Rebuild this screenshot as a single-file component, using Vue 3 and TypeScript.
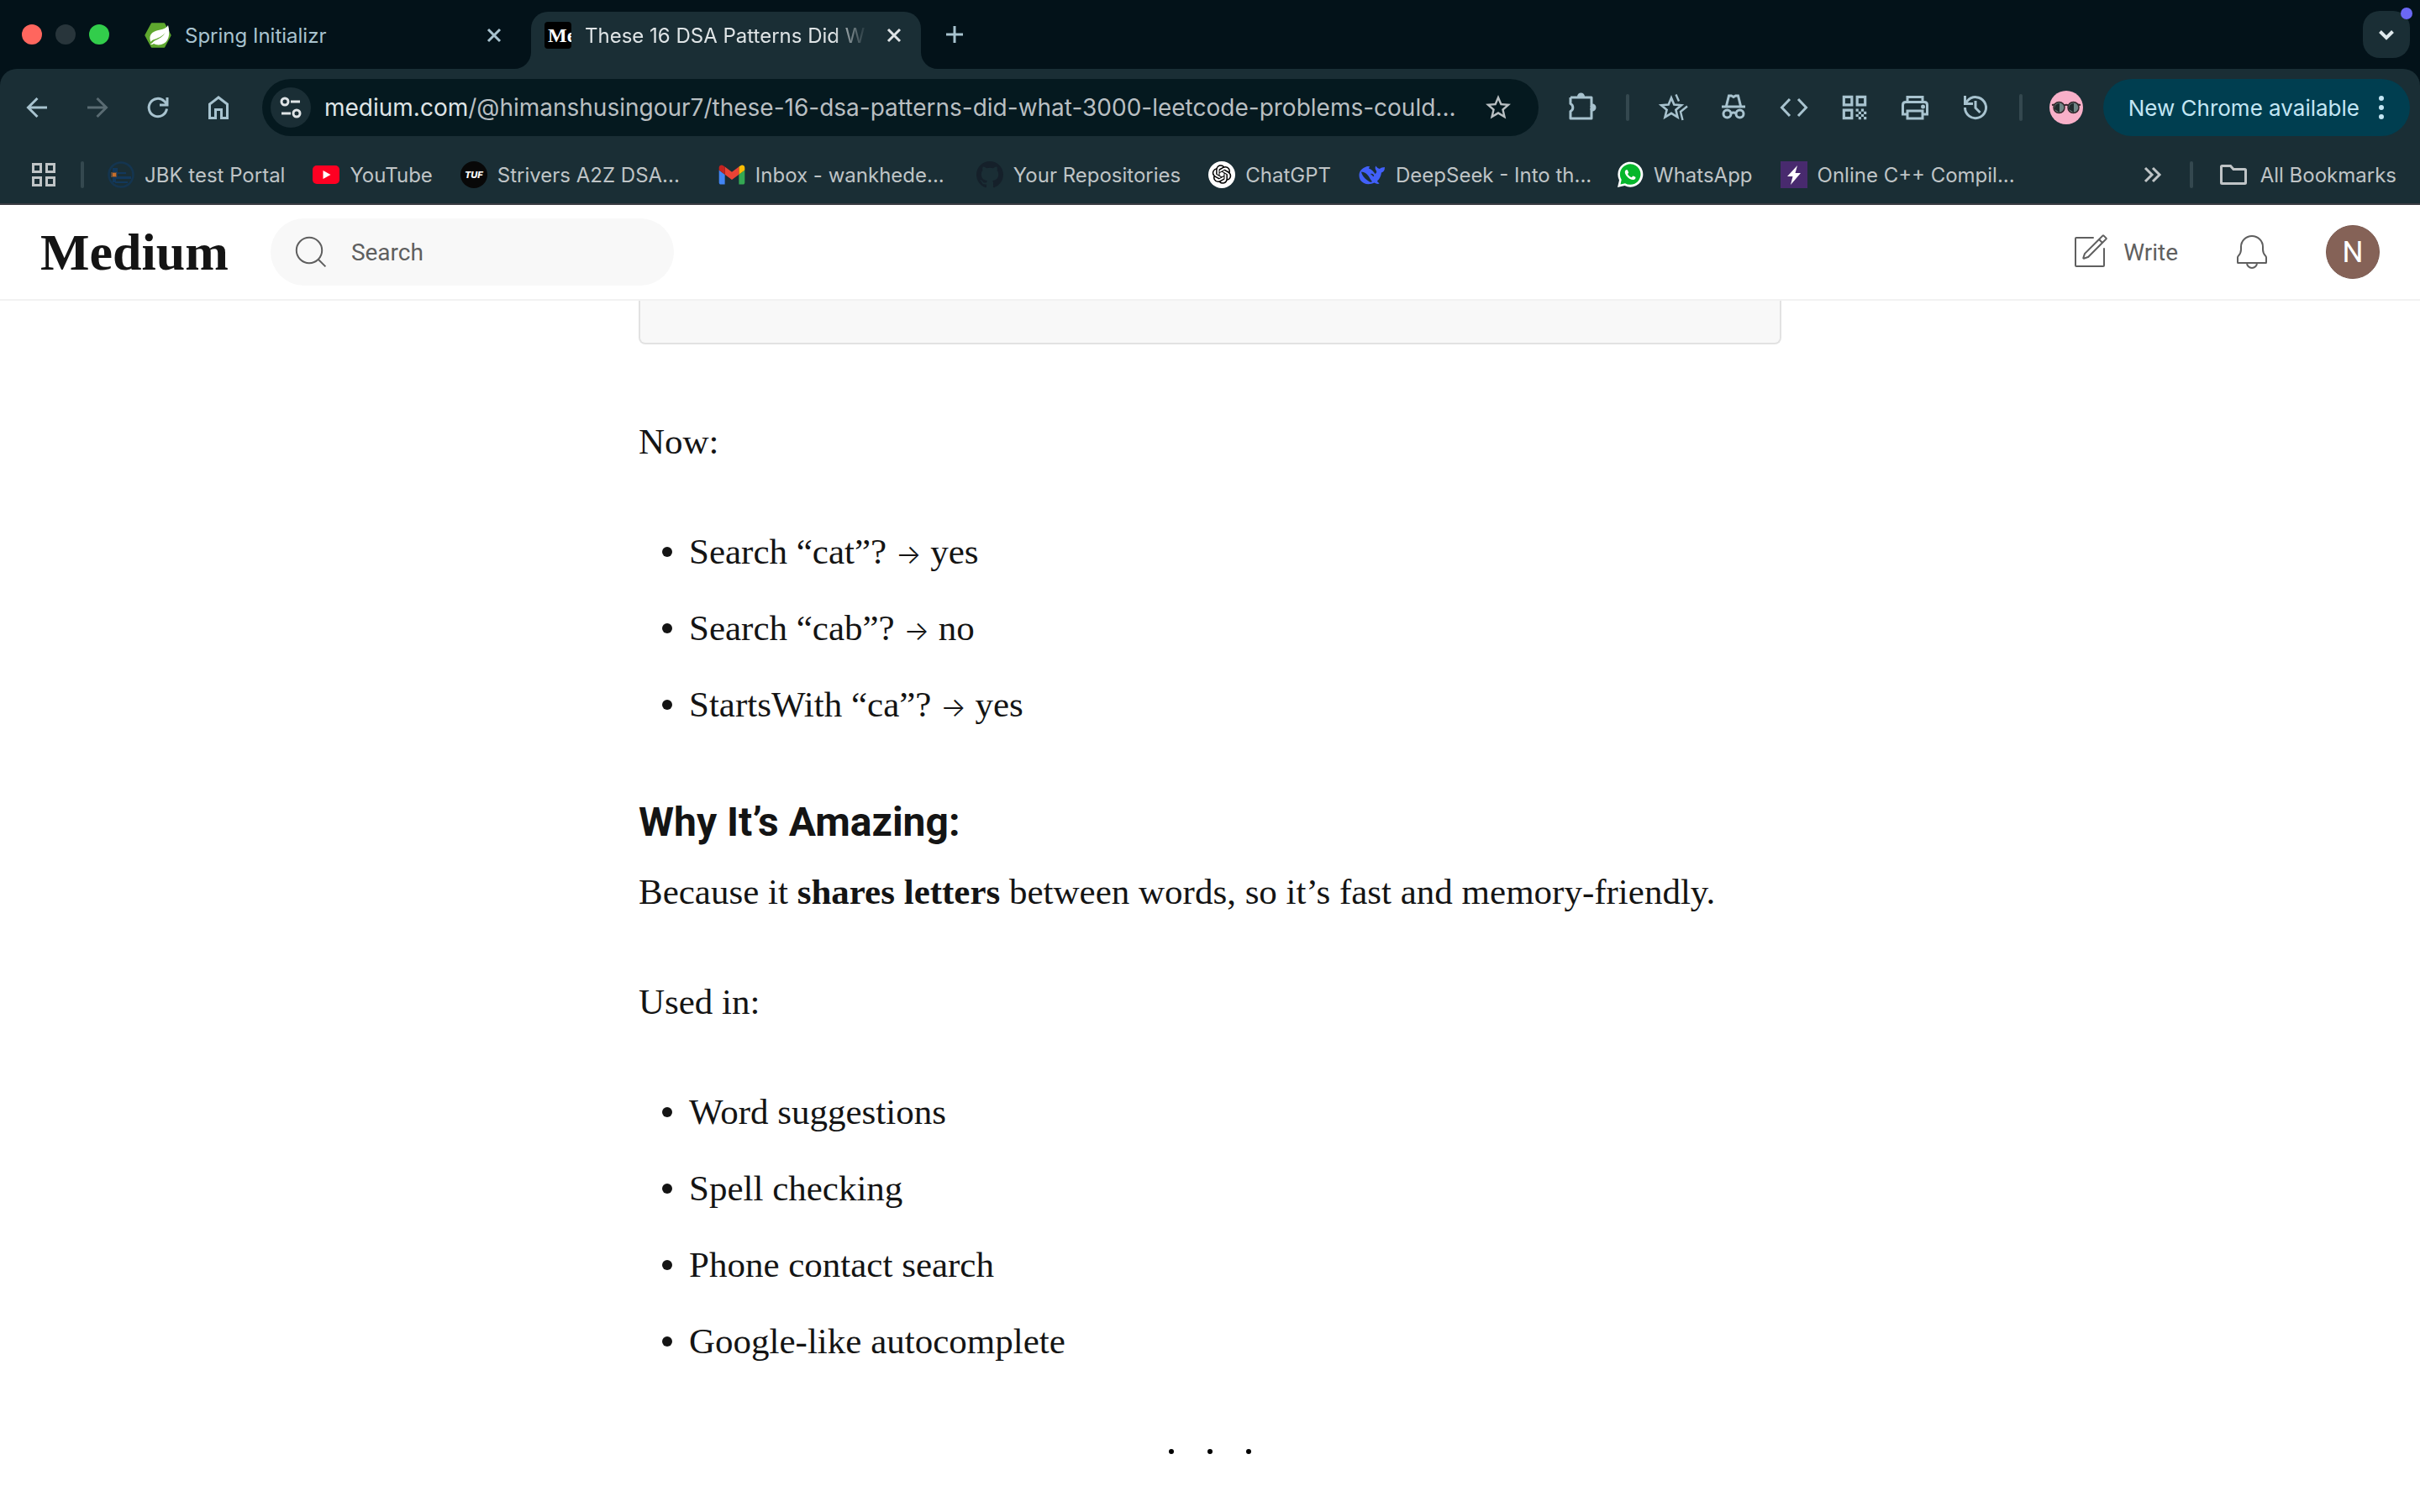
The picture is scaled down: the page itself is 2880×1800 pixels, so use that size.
<script setup lang="ts">
import { ref } from 'vue'

interface Bookmark {
  icon: string
  label: string
}

interface Lookup {
  call: string
  answer: string
}

const bookmarks: Bookmark[] = [
  { icon: 'jbk', label: 'JBK test Portal' },
  { icon: 'youtube', label: 'YouTube' },
  { icon: 'tuf', label: 'Strivers A2Z DSA...' },
  { icon: 'gmail', label: 'Inbox - wankhede...' },
  { icon: 'github', label: 'Your Repositories' },
  { icon: 'chatgpt', label: 'ChatGPT' },
  { icon: 'deepseek', label: 'DeepSeek - Into th...' },
  { icon: 'whatsapp', label: 'WhatsApp' },
  { icon: 'online', label: 'Online C++ Compil...' },
]

const lookups: Lookup[] = [
  { call: 'Search “cat”?', answer: 'yes' },
  { call: 'Search “cab”?', answer: 'no' },
  { call: 'StartsWith “ca”?', answer: 'yes' },
]
const uses: string[] = ['Word suggestions', 'Spell checking', 'Phone contact search', 'Google-like autocomplete']
const query = ref('')
</script>

<template>
  <div class="window">
    <div class="tabstrip">
      <div class="lights">
        <span class="light red"></span>
        <span class="light grey"></span>
        <span class="light green"></span>
      </div>
      <div class="tab">
        <svg class="fav" viewBox="0 0 32 32">
          <path d="M8.500 2h15L31 16l-7.500 14h-15L1 16z" fill="#5fa82f" stroke="#5fa82f" stroke-width="1.500" stroke-linejoin="round" />
          <path d="M28 4c3 10 1 21-8 23-4 1-7 0-9-1-1.500 1-3 1.500-4 .5 2-1 3-2.500 5-4 5-2 10-5 13-10-4 5-9 7-15 9-1 .5-2 1.500-2.500 2.500C5 18 7 13 13 11c6-2 12-2 15-7z" fill="#fff" />
        </svg>
        <span class="tab-title">Spring Initializr</span>
        <button class="close" aria-label="Close tab">
          <svg viewBox="0 0 24 24"><path d="M5 5l14 14M19 5L5 19" /></svg>
        </button>
      </div>
      <svg class="flare" viewBox="0 0 20 20"><path d="M20 0v20H0A20 20 0 0 0 20 0z" /></svg>
      <div class="tab active">
        <span class="me-fav">Me</span>
        <span class="tab-title fade">These 16 DSA Patterns Did W</span>
        <button class="close" aria-label="Close tab">
          <svg viewBox="0 0 24 24"><path d="M5 5l14 14M19 5L5 19" /></svg>
        </button>
      </div>
      <svg class="flare" viewBox="0 0 20 20"><path d="M0 0v20h20A20 20 0 0 1 0 0z" /></svg>
      <button class="new-tab" aria-label="New tab">
        <svg viewBox="0 0 24 24"><path d="M12 2v20M2 12h20" /></svg>
      </button>
      <button class="tab-search" aria-label="Search tabs">
        <svg viewBox="0 0 24 24"><path d="M4.500 8.500l7.500 7.500 7.500-7.500" /></svg>
        <span class="dot"></span>
      </button>
    </div>

    <div class="chrome">
      <div class="toolbar">
        <button class="tool" aria-label="Back">
          <svg viewBox="0 0 40 40" class="line"><path d="M32 20H10M20.500 9L9.500 20l11 11" /></svg>
        </button>
        <button class="tool dim" aria-label="Forward">
          <svg viewBox="0 0 40 40" class="line"><path d="M8 20h22M19.500 9l11 11-11 11" /></svg>
        </button>
        <button class="tool" aria-label="Reload">
          <svg viewBox="0 0 40 40" class="line"><path d="M30.500 21.500A10.700 10.700 0 1 1 27.500 12.500L31 16M31 8v9h-9" /></svg>
        </button>
        <button class="tool" aria-label="Home">
          <svg viewBox="0 0 40 40" class="line"><path d="M9.500 32.500V16L20 8l10.500 8v16.500H23.500v-10h-7v10z" /></svg>
        </button>
        <div class="omnibox">
          <button class="site-info" aria-label="Site information">
            <svg viewBox="0 0 40 40" class="line"><circle cx="13" cy="13" r="4" /><path d="M20 13h11M9 27h11" /><circle cx="27" cy="27" r="4" /></svg>
          </button>
          <span class="url"><b>medium.com</b>/@himanshusingour7/these-16-dsa-patterns-did-what-3000-leetcode-problems-could...</span>
          <button class="star" aria-label="Bookmark this page">
            <svg viewBox="0 0 24 24"><path d="M22 9.240l-7.190-.62L12 2 9.190 8.630 2 9.240l5.460 4.730L5.820 21 12 17.270 18.180 21l-1.630-7.030L22 9.240zM12 15.400l-3.760 2.270 1-4.280-3.320-2.880 4.380-.38L12 6.100l1.710 4.040 4.380.38-3.320 2.880 1 4.280L12 15.400z" /></svg>
          </button>
        </div>
        <div class="pinned">
          <button class="tool" aria-label="Extensions">
            <svg viewBox="0 0 40 40" class="line">
              <path d="M6 8h25v11M31 21v12H6v-8.500a5 5 0 0 0 0-9V8" stroke-linejoin="round" />
              <path d="M14 7a4.500 4.500 0 0 1 9 0zM32 15.500a4.500 4.500 0 0 1 0 9z" fill="currentColor" stroke="none" />
              <path d="M31 18v5" />
            </svg>
          </button>
          <span class="rule"></span>
          <div class="group">
            <button class="tool" aria-label="Favourites">
              <svg viewBox="0 0 40 40" class="line" stroke-linejoin="miter">
                <path d="M18 8.500l3.300 8 8.700.7-6.600 5.600 2.100 8.700-7.500-4.700-7.500 4.700 2.100-8.700L6 17.200l8.700-.7z" stroke-width="2.600" />
                <path d="M23.500 4.500l3.500 8M37 18.500l-8 6.500 2.500 10" stroke-width="2.400" />
              </svg>
            </button>
            <button class="tool" aria-label="Incognito">
              <svg viewBox="0 0 40 40" class="line">
                <path d="M6 19h28M11.500 18l3-12h3l2.500 1.500L22.500 6h3l3 12" />
                <circle cx="12.500" cy="27.500" r="4.500" /><circle cx="27.500" cy="27.500" r="4.500" /><path d="M17 27q3-2 6 0" />
              </svg>
            </button>
            <button class="tool" aria-label="Developer tools">
              <svg viewBox="0 0 40 40" class="line"><path d="M15 10L5.500 20l9.500 10M25 10l9.500 10L25 30" /></svg>
            </button>
            <button class="tool" aria-label="QR code">
              <svg viewBox="0 0 24 24" class="solid small"><path d="M3 11h8V3H3v8zm2-6h4v4H5V5zM3 21h8v-8H3v8zm2-6h4v4H5v-4zM13 3v8h8V3h-8zm6 6h-4V5h4v4zM13 13h2v2h-2zM15 15h2v2h-2zM13 17h2v2h-2zM17 17h2v2h-2zM19 19h2v2h-2zM15 19h2v2h-2zM17 13h2v2h-2zM19 15h2v2h-2z" /></svg>
            </button>
            <button class="tool" aria-label="Print">
              <svg viewBox="0 0 40 40" class="line">
                <path d="M11 13V7.500h18V13M11 28H5.500V17q0-3.500 3.500-3.500h22q3.500 0 3.500 3.500v11H29M11 24h18v9H11z" />
                <circle cx="29.500" cy="19" r="1" fill="currentColor" />
              </svg>
            </button>
            <button class="tool" aria-label="History">
              <svg viewBox="0 0 40 40" class="line"><path d="M7.500 20a12.500 12.500 0 1 0 3-8L7.500 15M7.500 6v9.500H17M20 12v8.500l5.500 5.500" /></svg>
            </button>
          </div>
          <span class="rule"></span>
          <button class="tool" aria-label="Profile">
            <svg viewBox="0 0 40 40">
              <circle cx="20" cy="20" r="20" fill="#f8b0c9" />
              <circle cx="11.500" cy="20" r="6.500" fill="#6f8585" stroke="#33282c" stroke-width="1.500" />
              <circle cx="28.500" cy="20" r="6.500" fill="#6f8585" stroke="#33282c" stroke-width="1.500" />
              <path d="M6 22a6 6 0 0 1 6-7v11zM23 22a6 6 0 0 1 6-7v11z" fill="#1f2a2c" />
              <path d="M3 17l3-.5M37 17l-3-.5M17.500 17.500q2.500-1.500 5 0" stroke="#33282c" stroke-width="2" fill="none" />
            </svg>
          </button>
        </div>
        <button class="update">
          New Chrome available
          <svg viewBox="0 0 12 32"><circle cx="6" cy="5" r="3" /><circle cx="6" cy="16" r="3" /><circle cx="6" cy="27" r="3" /></svg>
        </button>
      </div>

      <nav class="bookmarks">
        <button class="apps" aria-label="Apps">
          <svg viewBox="0 0 32 32" class="line"><path d="M3.500 3.500h9v9h-9zM19.500 3.500h9v9h-9zM3.500 19.500h9v9h-9zM19.500 19.500h9v9h-9z" /></svg>
        </button>
        <span class="rule"></span>
        <a v-for="item in bookmarks" :key="item.label" href="#" class="bookmark">
          <svg v-if="item.icon === 'jbk'" viewBox="0 0 32 32">
            <circle cx="16" cy="16" r="14.500" fill="none" stroke="#143550" stroke-width="2.500" />
            <path d="M6 8h6v5h10v2H12v3h16v3H10v4H6zM9 24h15v2H9z" fill="#12385c" />
            <path d="M4 13h7v6H4z" fill="#5f4a3a" /><path d="M6 14h4v4H6z" fill="#c8702c" />
          </svg>
          <svg v-else-if="item.icon === 'youtube'" viewBox="0 0 32 32"><rect y="5" width="32" height="22" rx="5" fill="#ff0022" /><path d="M12.500 11l9 5-9 5z" fill="#fff" /></svg>
          <span v-else-if="item.icon === 'tuf'" class="tuf">TUF</span>
          <svg v-else-if="item.icon === 'gmail'" viewBox="50 29 92 92">
            <path d="M58 108h14V74L52 59v43c0 3.320 2.690 6 6 6" fill="#4285f4" />
            <path d="M120 108h14c3.320 0 6-2.690 6-6V59l-20 15" fill="#34a853" />
            <path d="M120 48v26l20-15v-8c0-7.420-8.470-11.650-14.400-7.200" fill="#fbbc04" />
            <path d="M72 74V48l24 18 24-18v26L96 92" fill="#ea4335" />
            <path d="M52 51v8l20 15V48l-5.600-4.200c-5.940-4.450-14.400-.22-14.400 7.200" fill="#c5221f" />
          </svg>
          <svg v-else-if="item.icon === 'github'" viewBox="0 0 16 16"><path fill="#15202a" d="M8 0C3.580 0 0 3.580 0 8c0 3.540 2.290 6.530 5.470 7.590.4.07.55-.17.55-.38 0-.19-.01-.82-.01-1.490-2.010.37-2.530-.49-2.690-.94-.09-.23-.48-.94-.82-1.130-.28-.15-.68-.52-.01-.53.63-.01 1.080.58 1.230.82.72 1.210 1.870.87 2.330.66.07-.52.28-.87.51-1.070-1.780-.2-3.640-.89-3.640-3.950 0-.87.31-1.590.82-2.150-.08-.2-.36-1.020.08-2.120 0 0 .67-.21 2.200.82.64-.18 1.320-.27 2-.27s1.360.09 2 .27c1.530-1.040 2.200-.82 2.200-.82.44 1.100.16 1.920.08 2.120.51.56.82 1.270.82 2.150 0 3.070-1.870 3.750-3.650 3.950.29.25.54.73.54 1.480 0 1.070-.01 1.930-.01 2.200 0 .21.15.46.55.38A8.010 8.010 0 0 0 16 8c0-4.420-3.580-8-8-8z" /></svg>
          <svg v-else-if="item.icon === 'chatgpt'" viewBox="-5 -4.500 34 34">
            <circle cx="12" cy="12.500" r="17" fill="#fff" />
            <path d="M22.2819 9.8211a5.9847 5.9847 0 0 0-.5157-4.9108 6.0462 6.0462 0 0 0-6.5098-2.9A6.0651 6.0651 0 0 0 4.9807 4.1818a5.9847 5.9847 0 0 0-3.9977 2.9 6.0462 6.0462 0 0 0 .7427 7.0966 5.98 5.98 0 0 0 .511 4.9107 6.051 6.051 0 0 0 6.5146 2.9001A5.9847 5.9847 0 0 0 13.2599 24a6.0557 6.0557 0 0 0 5.7718-4.2058 5.9894 5.9894 0 0 0 3.9977-2.9001 6.0557 6.0557 0 0 0-.7475-7.0729zm-9.022 12.6081a4.4755 4.4755 0 0 1-2.8764-1.0408l.1419-.0804 4.7783-2.7582a.7948.7948 0 0 0 .3927-.6813v-6.7369l2.02 1.1686a.071.071 0 0 1 .038.052v5.5826a4.504 4.504 0 0 1-4.4945 4.4944zm-9.6607-4.1254a4.4708 4.4708 0 0 1-.5346-3.0137l.142.0852 4.783 2.7582a.7712.7712 0 0 0 .7806 0l5.8428-3.3685v2.3324a.0804.0804 0 0 1-.0332.0615L9.74 19.9502a4.4992 4.4992 0 0 1-6.1408-1.6464zM2.3408 7.8956a4.485 4.485 0 0 1 2.3655-1.9728V11.6a.7664.7664 0 0 0 .3879.6765l5.8144 3.3543-2.0201 1.1685a.0757.0757 0 0 1-.071 0l-4.8303-2.7865A4.504 4.504 0 0 1 2.3408 7.872zm16.5963 3.8558L13.1038 8.364 15.1192 7.2a.0757.0757 0 0 1 .071 0l4.8303 2.7913a4.4944 4.4944 0 0 1-.6765 8.1042v-5.6772a.79.79 0 0 0-.407-.667zm2.0107-3.0231l-.142-.0852-4.7735-2.7818a.7759.7759 0 0 0-.7854 0L9.409 9.2297V6.8974a.0662.0662 0 0 1 .0284-.0615l4.8303-2.7866a4.4992 4.4992 0 0 1 6.6802 4.66zM8.3065 12.863l-2.02-1.1638a.0804.0804 0 0 1-.038-.0567V6.0742a4.4992 4.4992 0 0 1 7.3757-3.4537l-.142.0805L8.704 5.459a.7948.7948 0 0 0-.3927.6813zm1.0976-2.3654l2.602-1.4998 2.6069 1.4998v2.9994l-2.5974 1.4997-2.6067-1.4997Z" />
          </svg>
          <svg v-else-if="item.icon === 'deepseek'" viewBox="0 0 32 32">
            <path fill="#4160fa" fill-rule="evenodd" d="M10 6h3l-1 2.500c4 1.500 6 4 7.500 6.500 1.500-1 2-2 1.500-3.500-1.500-2-2-4-.5-6 .8 2 2.500 3 4.500 3.500 1.500-2 3.500-1.500 6-2 0 4-1.500 6-4 6.500-.5 4-2 7.500-5 10 .5 1.500 2 2 2.500 3-2 1-4 0-6-1-6 3-13 2-16.500-3C-1 17 0 9 10 6zM3 12.500c1 5 5 9 10 12 1.500.6 2.500.2 3-.2C13 21 11 13 3 12.500z" />
            <path d="M14.500 15.500q2.500-.5 3 2.500" fill="none" stroke="#1a2e35" stroke-width="1.500" />
          </svg>
          <svg v-else-if="item.icon === 'whatsapp'" viewBox="0 0 32 32">
            <path d="M1 31l2-8.500A15 15 0 1 1 9.500 29z" fill="#fff" />
            <path d="M4.500 27.500l1.200-5.500A12.300 12.300 0 1 1 10 26.200z" fill="#06b62c" />
            <path transform="translate(3.500 3.500) scale(1.050)" fill="#fff" d="M17.472 14.382c-.297-.149-1.758-.867-2.030-.967-.273-.099-.471-.148-.67.15-.197.297-.767.966-.94 1.164-.173.199-.347.223-.644.075-.297-.15-1.255-.463-2.390-1.475-.883-.788-1.480-1.761-1.653-2.059-.173-.297-.018-.458.13-.606.134-.133.298-.347.446-.52.149-.174.198-.298.298-.497.099-.198.05-.371-.025-.52-.075-.149-.669-1.612-.916-2.207-.242-.579-.487-.5-.669-.51-.173-.008-.371-.01-.57-.01-.198 0-.52.074-.792.372-.272.297-1.040 1.016-1.040 2.479 0 1.462 1.065 2.875 1.213 3.074.149.198 2.096 3.200 5.077 4.487.709.306 1.262.489 1.694.625.712.227 1.360.195 1.871.118.571-.085 1.758-.719 2.006-1.413.248-.694.248-1.289.173-1.413-.074-.124-.272-.198-.57-.347" />
          </svg>
          <svg v-else viewBox="0 0 32 32"><path d="M0 0h32v32H0z" fill="#482a6e" /><path d="M20 5L8 18h6.500L12 28l12-14h-6.500z" fill="#fff" /></svg>
          <span :class="['label', { long: item.label.endsWith('...') }]">{{ item.label }}</span>
        </a>
        <div class="bookmarks-end">
          <button class="more" aria-label="More bookmarks">
            <svg viewBox="0 0 32 32" class="line"><path d="M7 8l8 8-8 8M16 8l8 8-8 8" /></svg>
          </button>
          <span class="rule"></span>
          <a href="#" class="bookmark all">
            <svg viewBox="0 0 32 32" class="line"><path d="M1.500 6v19.500q0 1 1 1h27q1 0 1-1v-15q0-1-1-1H16L12.500 5.500h-10q-1 0-1 1z" /></svg>
            <span>All Bookmarks</span>
          </a>
        </div>
      </nav>
    </div>

    <header class="site">
      <a href="#" class="logo">Medium</a>
      <label class="search">
        <svg viewBox="0 0 24 24" class="thin"><circle cx="11" cy="11" r="7.600" /><path d="M16.500 16.500l4.200 4.200" /></svg>
        <input v-model="query" type="text" placeholder="Search" aria-label="Search" />
      </label>
      <div class="actions">
        <a href="#" class="write">
          <svg viewBox="0 0 24 24" class="thin">
            <path stroke="none" fill="currentColor" d="M14 4a.5.5 0 0 0 0-1zm7 6a.5.5 0 0 0-1 0zm-7-7H4v1h10zM3 4v16h1V4zm1 17h16v-1H4zm17-1V10h-1v10zm-1 1a1 1 0 0 0 1-1h-1zM3 20a1 1 0 0 0 1 1v-1zM4 3a1 1 0 0 0-1 1h1z" />
            <path d="m17.500 4.500-8.458 8.458a.25.25 0 0 0-.06.098l-.824 2.470a.25.25 0 0 0 .316.316l2.470-.823a.25.25 0 0 0 .098-.06L19.500 6.500m-2-2 2.323-2.323a.25.25 0 0 1 .354 0l1.646 1.646a.25.25 0 0 1 0 .354L19.500 6.500m-2-2 2 2" />
          </svg>
          Write
        </a>
        <button class="bell" aria-label="Notifications">
          <svg viewBox="0 0 24 24" class="thin">
            <path stroke-linecap="round" d="M15 18.500a3 3 0 1 1-6 0" />
            <path stroke-linejoin="round" d="M5.500 10.532V9a6.500 6.500 0 0 1 13 0v1.532c0 1.420.564 2.782 1.568 3.786l.032.032c.256.256.4.604.4.966v2.934a.25.25 0 0 1-.25.25H3.750a.25.25 0 0 1-.25-.25v-2.934c0-.363.144-.71.4-.966l.032-.032A5.350 5.350 0 0 0 5.500 10.532Z" />
          </svg>
        </button>
        <button class="avatar">N</button>
      </div>
    </header>

    <main class="article">
      <div class="code-block"></div>
      <p>Now:</p>
      <ul>
        <li v-for="line in lookups" :key="line.call"><span>{{ line.call }} <span class="arrow">→</span> {{ line.answer }}</span></li>
      </ul>
      <h2>Why It’s Amazing:</h2>
      <p class="after-heading">Because it <strong>shares letters</strong> between words, so it’s fast and memory-friendly.</p>
      <p>Used in:</p>
      <ul>
        <li v-for="line in uses" :key="line">{{ line }}</li>
      </ul>
      <div class="separator" role="separator"><span></span><span></span><span></span></div>
    </main>
  </div>
</template>

<style>
body {
  margin: 0;
  background: #fff;
}
</style>

<style scoped>
.window {
  min-height: 100vh;
  font-family: Inter, "Liberation Sans", sans-serif;
  background: #fff;
}
button {
  display: flex;
  align-items: center;
  justify-content: center;
  flex: none;
  margin: 0;
  padding: 0;
  border: 0;
  background: none;
  color: inherit;
  font: inherit;
}
a {
  color: inherit;
  text-decoration: none;
}
svg {
  display: block;
  flex: none;
}
.line {
  fill: none;
  stroke: currentColor;
  stroke-width: 3;
}
.solid {
  fill: currentColor;
}
.thin {
  fill: none;
  stroke: currentColor;
  stroke-width: 1;
}

/* Tab strip */
.tabstrip {
  display: flex;
  align-items: flex-end;
  height: 82px;
  padding: 0 12px 0 26px;
  box-sizing: border-box;
  background: #031219;
  color: #a8c3cf;
  font-size: 24px;
}
.lights {
  display: flex;
  align-self: center;
  gap: 16px;
  margin-right: 26px;
}
.light {
  width: 24px;
  height: 24px;
  border-radius: 50%;
}
.red {
  background: #ff665e;
}
.grey {
  background: #28353b;
}
.green {
  background: #32cd4b;
}
.tab {
  display: flex;
  align-items: center;
  gap: 16px;
  width: 456px;
  height: 68px;
  padding: 0 12px 12px 16px;
  box-sizing: border-box;
}
.tab.active {
  width: 464px;
  padding-right: 20px;
  border-radius: 20px 20px 0 0;
  background: #1a2e35;
  color: #dfe4e6;
}
.fav,
.me-fav {
  flex: none;
  width: 32px;
  height: 32px;
}
.me-fav {
  overflow: hidden;
  border-radius: 4px;
  background: #000;
  color: #fff;
  font: bold 24px/32px "Liberation Serif", serif;
  text-indent: 4px;
}
.tab-title {
  flex: 1;
  min-width: 0;
  overflow: hidden;
  white-space: nowrap;
}
.fade {
  mask-image: linear-gradient(to right, #000 296px, transparent 336px);
}
.close svg {
  width: 24px;
  height: 24px;
  fill: none;
  stroke: currentColor;
  stroke-width: 3;
}
.flare {
  width: 20px;
  height: 20px;
  fill: #1a2e35;
}
.new-tab {
  align-self: center;
  margin-left: 8px;
}
.new-tab svg {
  width: 24px;
  height: 24px;
  fill: none;
  stroke: currentColor;
  stroke-width: 3;
}
.tab-search {
  position: relative;
  align-self: center;
  width: 56px;
  height: 56px;
  margin-left: auto;
  border-radius: 20px;
  background: #1a2e35;
  color: #dfe9ec;
}
.tab-search svg {
  width: 24px;
  height: 24px;
  fill: none;
  stroke: currentColor;
  stroke-width: 4;
}
.dot {
  position: absolute;
  top: -4px;
  right: -3px;
  width: 14px;
  height: 14px;
  border-radius: 50%;
  background: #6b68f5;
}

/* Toolbar */
.chrome {
  border-bottom: 2px solid #3a3c42;
  background: linear-gradient(#031219 24px, #1a2e35 24px);
}
.toolbar {
  display: flex;
  align-items: center;
  padding: 12px 12px 12px 8px;
  border-radius: 20px 20px 0 0;
  background: #1a2e35;
  color: #a8c3cf;
}
.tool {
  width: 72px;
  height: 68px;
}
.tool svg {
  width: 40px;
  height: 40px;
}
.tool .small {
  width: 38px;
  height: 38px;
}
.dim {
  color: #596b72;
}
.omnibox {
  display: flex;
  flex: 1;
  align-items: center;
  min-width: 0;
  height: 68px;
  margin: 0 16px;
  padding: 0 30px 0 10px;
  box-sizing: border-box;
  border-radius: 34px;
  background: #05191f;
  color: #b9bfc2;
  font-size: 28px;
}
.site-info {
  width: 48px;
  height: 48px;
  margin-right: 16px;
  border-radius: 50%;
  background: #1a2e35;
  color: #dfe4e6;
}
.site-info svg {
  width: 40px;
  height: 40px;
}
.url {
  flex: 1;
  min-width: 0;
  overflow: hidden;
  white-space: nowrap;
}
.url b {
  color: #dfe4e6;
  font-weight: 400;
}
.star svg {
  width: 36px;
  height: 36px;
  fill: currentColor;
}
.pinned,
.group {
  display: flex;
  align-items: center;
}
.pinned {
  gap: 16px;
}
.rule {
  flex: none;
  width: 4px;
  height: 32px;
  border-radius: 2px;
  background: #34484f;
}
.update {
  gap: 20px;
  height: 68px;
  margin-left: 8px;
  padding: 0 28px 0 30px;
  border-radius: 34px;
  background: #003e50;
  color: #c3e6f4;
  font-size: 26px;
}
.update svg {
  width: 12px;
  height: 32px;
  fill: currentColor;
}

/* Bookmarks bar */
.bookmarks {
  display: flex;
  align-items: center;
  height: 68px;
  padding: 0 28px 0 36px;
  background: #1a2e35;
  color: #bfc4c6;
  font-size: 24px;
}
.apps {
  margin-right: 28px;
}
.bookmarks svg {
  width: 32px;
  height: 32px;
}
.bookmark {
  display: flex;
  flex: none;
  align-items: center;
  gap: 12px;
  margin-right: 33px;
  white-space: nowrap;
}
.rule + .bookmark {
  margin-left: 28px;
}
.long {
  width: 230px;
}
.tuf {
  width: 32px;
  border-radius: 50%;
  background: #080808;
  color: #fff;
  font-size: 11px;
  font-style: italic;
  font-weight: 800;
  line-height: 32px;
  text-align: center;
}
.bookmarks-end {
  display: flex;
  align-items: center;
  margin-left: auto;
}
.more {
  margin-right: 28px;
}
.bookmark.all {
  gap: 16px;
  margin-right: 0;
  margin-left: 32px;
}

/* Site header */
.site {
  display: flex;
  align-items: center;
  height: 112px;
  padding: 0 48px;
  border-bottom: 2px solid #f2f2f2;
  color: #5f5f5f;
  font-family: Roboto, "Liberation Sans", sans-serif;
  font-size: 28px;
}
.logo {
  margin-right: 50px;
  color: #141414;
  font: bold 62px/80px "Liberation Serif", serif;
}
.search {
  display: flex;
  align-items: center;
  gap: 24px;
  width: 480px;
  height: 80px;
  padding: 0 24px;
  box-sizing: border-box;
  border-radius: 40px;
  background: #f8f8f8;
}
.site svg {
  width: 48px;
  height: 48px;
}
.search input {
  flex: 1;
  min-width: 0;
  padding: 0;
  border: 0;
  outline: 0;
  background: none;
  color: #141414;
  font: inherit;
}
.search input::placeholder {
  color: #5f5f5f;
  opacity: 1;
}
.actions {
  display: flex;
  align-items: center;
  gap: 64px;
  margin-left: auto;
}
.write {
  display: flex;
  align-items: center;
  gap: 16px;
}
.avatar {
  width: 64px;
  height: 64px;
  border: 1px solid #7a594f;
  border-radius: 50%;
  background: #856257;
  color: #fff;
  font-size: 35px;
}

/* Article */
.article {
  max-width: 1360px;
  margin: 0 auto;
  color: #141414;
  font: 43px/64px "Liberation Serif", serif;
}
.code-block {
  height: 50px;
  margin-bottom: 84px;
  border: 2px solid #e2e2e2;
  border-top: 0;
  border-radius: 0 0 8px 8px;
  background: #f8f8f8;
}
.article p {
  margin: 67px 0;
}
.article ul {
  display: flex;
  flex-direction: column;
  gap: 27px;
  margin: 0;
  padding: 0;
  list-style: none;
}
.article li {
  display: flex;
  align-items: center;
}
.article li::before {
  content: "";
  width: 12px;
  height: 12px;
  margin: 0 20px 0 28px;
  border-radius: 50%;
  background: #141414;
}
.arrow {
  font: 300 32px/32px Inter, sans-serif;
}
.article h2 {
  margin: 78px 0 21px;
  font: bold 48px/60px Roboto, "Liberation Sans", sans-serif;
}
.article .after-heading {
  margin-top: 21px;
}
.separator {
  display: flex;
  justify-content: center;
  gap: 40px;
  padding: 96px 0 60px;
}
.separator span {
  width: 6px;
  height: 6px;
  border-radius: 50%;
  background: #000;
}
</style>
